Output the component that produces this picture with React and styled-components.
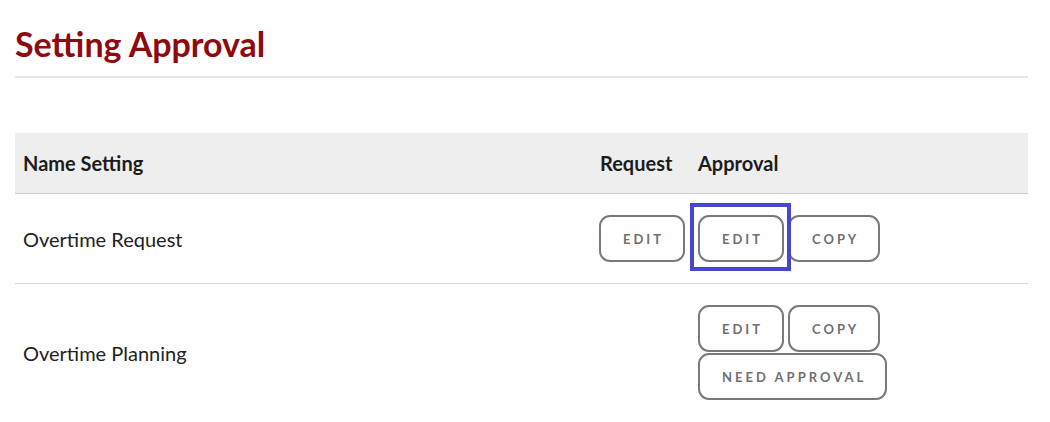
import React from 'react';
import styled, { createGlobalStyle } from 'styled-components';

const GlobalStyle = createGlobalStyle`
  body {
    margin: 0;
    background: #fff;
    font-family: Lato, "Open Sans", sans-serif;
    color: #222;
  }
`;

const Page = styled.div`
  padding: 0 22px 0 15px;
`;

const Title = styled.h1`
  margin: 0;
  padding-top: 23px;
  padding-bottom: 12px;
  font-size: 34px;
  line-height: 41px;
  font-weight: 700;
  color: #8e0a0e;
  border-bottom: 2px solid #e6e6e6;
`;

const Table = styled.div`
  margin-top: 55px;
  display: grid;
  grid-template-columns: 577px 98px 1fr;
`;

const HeadCell = styled.div`
  background: #eeeeee;
  height: 60px;
  display: flex;
  align-items: center;
  padding-left: ${(p) => p.$pad || 8}px;
  font-size: 20px;
  font-weight: 700;
  color: #1c1c1c;
  border-bottom: 1px solid #cfcfcf;
`;

const Cell = styled.div`
  display: flex;
  align-items: center;
  padding: 21px 0 21px ${(p) => p.$pad || 8}px;
  font-size: 20px;
  color: #222;
  border-bottom: ${(p) => (p.$last ? 'none' : '1px solid #d6d6d6')};
`;

const Buttons = styled.div`
  display: flex;
  flex-wrap: wrap;
  column-gap: 4px;
  row-gap: 1px;
  max-width: 322px;
`;

const Btn = styled.button`
  box-sizing: border-box;
  height: 47px;
  padding: 0 19px 0 22px;
  border: 2px solid #7a7a7a;
  border-radius: 11px;
  background: #fff;
  font-family: Lato, sans-serif;
  font-size: 13px;
  font-weight: 700;
  letter-spacing: 3px;
  color: #707070;
  cursor: pointer;
`;

const Focused = styled.span`
  position: relative;
  display: inline-flex;

  &::after {
    content: '';
    position: absolute;
    left: -8px;
    right: -7px;
    top: -12px;
    bottom: -9px;
    border: 4px solid #4646cf;
    pointer-events: none;
  }
`;

export default function App() {
  return (
    <>
      <GlobalStyle />
      <Page>
        <Title>Setting Approval</Title>
        <Table>
          <HeadCell>Name Setting</HeadCell>
          <HeadCell $pad={8}>Request</HeadCell>
          <HeadCell>Approval</HeadCell>

          <Cell>Overtime Request</Cell>
          <Cell $pad={7}>
            <Btn>EDIT</Btn>
          </Cell>
          <Cell>
            <Buttons>
              <Focused>
                <Btn>EDIT</Btn>
              </Focused>
              <Btn>COPY</Btn>
            </Buttons>
          </Cell>

          <Cell $last>Overtime Planning</Cell>
          <Cell $last $pad={7} />
          <Cell $last>
            <Buttons>
              <Btn>EDIT</Btn>
              <Btn>COPY</Btn>
              <Btn>NEED APPROVAL</Btn>
            </Buttons>
          </Cell>
        </Table>
      </Page>
    </>
  );
}
